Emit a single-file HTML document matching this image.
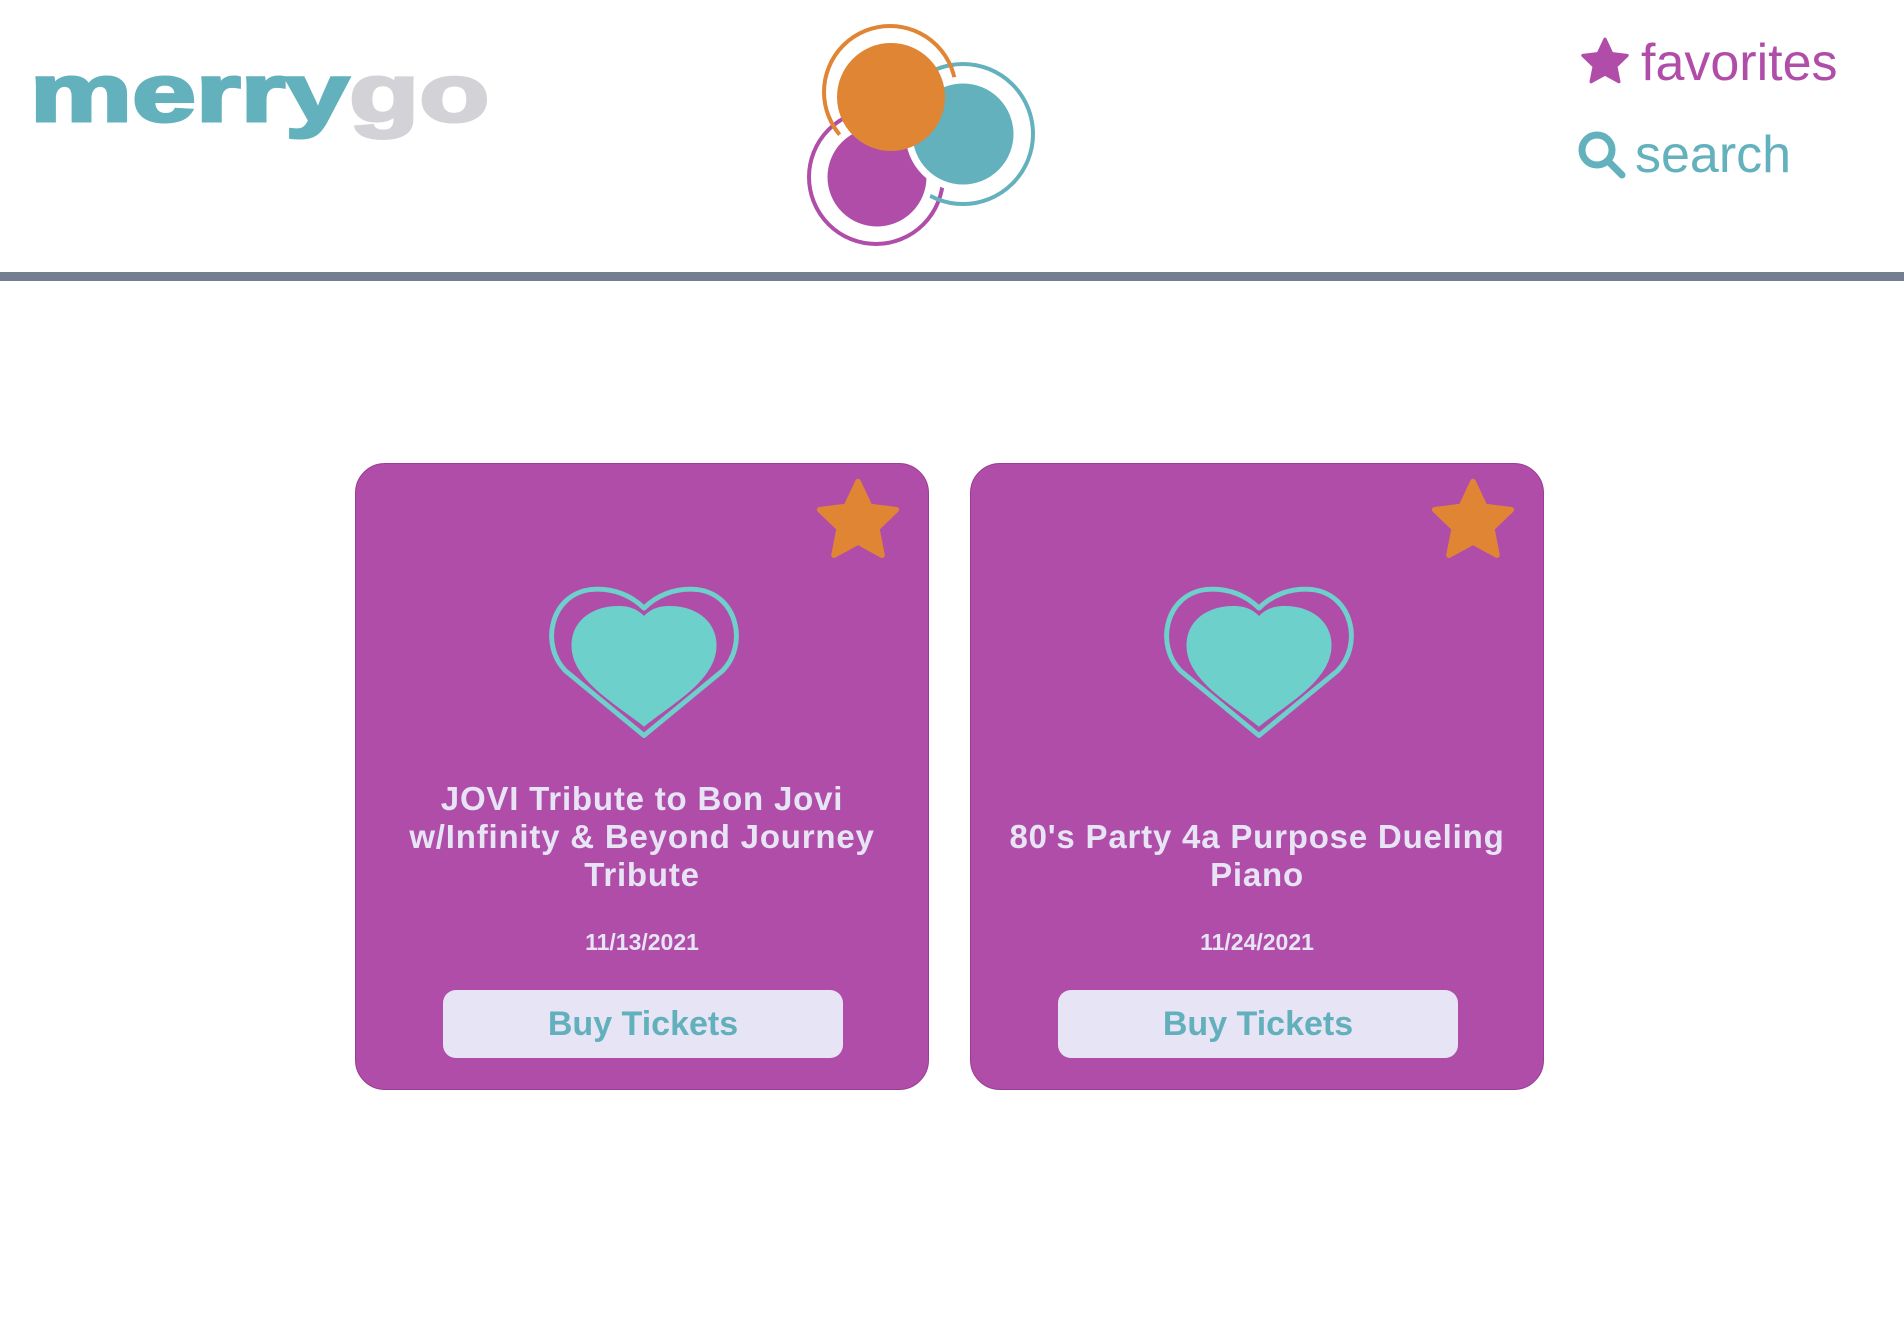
<!DOCTYPE html>
<html><head><meta charset="utf-8">
<style>
html,body{margin:0;padding:0;background:#fff;width:1904px;height:1320px;overflow:hidden;position:relative;font-family:"Liberation Sans",sans-serif}
.abs{position:absolute}
.logo{left:30px;top:34px;font-size:82px;font-weight:bold;line-height:120px;color:#63b1bc;white-space:nowrap;transform:scaleX(1.4);transform-origin:0 0;-webkit-text-stroke:3px #63b1bc;letter-spacing:0px}
.logo span{color:#d3d2d6;-webkit-text-stroke:3px #d3d2d6}
.bar{left:0;top:272px;width:1904px;height:9px;background:#737f90}
.nav{font-size:52px;white-space:nowrap;line-height:60px}
.card{width:572px;height:625px;border:1px solid #9a3d95;background:#b04da9;border-radius:30px;top:463px}
.title{left:0;width:572px;text-align:center;color:#e6e4f5;font-weight:bold;font-size:33px;letter-spacing:0.8px;line-height:38px}
.date{left:0;width:572px;text-align:center;color:#e6e4f5;font-weight:bold;font-size:23px;top:465px}
.btn{left:87px;top:526px;width:400px;height:68px;border-radius:13px;background:#e6e4f5;color:#62b0bb;font-weight:bold;font-size:34px;line-height:68px;text-align:center}
</style></head><body>
<div class="abs logo">merry<span>go</span></div>

<svg class="abs" style="left:790px;top:15px" width="250" height="235" viewBox="790 15 250 235">
<circle cx="876" cy="177" r="67" fill="none" stroke="#b04da9" stroke-width="4"/>
<circle cx="963" cy="134" r="70" fill="none" stroke="#63b1bc" stroke-width="4"/>
<circle cx="890" cy="92" r="66" fill="none" stroke="#e08534" stroke-width="4"/>
<circle cx="877" cy="177" r="53" fill="#b04da9" stroke="#fff" stroke-width="7"/>
<circle cx="963" cy="134" r="54" fill="#63b1bc" stroke="#fff" stroke-width="7"/>
<circle cx="891" cy="97" r="54" fill="#e08534"/>
</svg>

<svg class="abs" style="left:1578px;top:36px" width="54" height="52" viewBox="0 0 24 24"><path d="M12 1.5l3.1 6.6 7.1.9-5.2 5 1.4 7.1L12 17.6l-6.4 3.5 1.4-7.1-5.2-5 7.1-.9z" fill="#b04da9" stroke="#b04da9" stroke-width="1.5" stroke-linejoin="round"/></svg>
<div class="abs nav" style="left:1641px;top:33px;color:#b04da9">favorites</div>
<svg class="abs" style="left:1576px;top:129px" width="52" height="52" viewBox="0 0 52 52"><circle cx="21" cy="21" r="15" fill="none" stroke="#63b1bc" stroke-width="7"/><line x1="32" y1="32" x2="46" y2="46" stroke="#63b1bc" stroke-width="7" stroke-linecap="round"/></svg>
<div class="abs nav" style="left:1635px;top:125px;color:#63b1bc">search</div>

<div class="abs bar"></div>

<div class="abs card" style="left:355px">
 <svg class="abs" style="left:455px;top:12px" width="94" height="90" viewBox="0 0 24 24"><path d="M12 1.5l3.1 6.6 7.1.9-5.2 5 1.4 7.1L12 17.6l-6.4 3.5 1.4-7.1-5.2-5 7.1-.9z" fill="#e08534" stroke="#e08534" stroke-width="1.5" stroke-linejoin="round"/></svg>
 <svg class="abs" style="left:190px;top:120px" width="196" height="158" viewBox="0 0 200 160"><path d="M100 154 L20 88 C-6 62 4 10 46 5 C70 3 88 12 100 24 C112 12 130 3 154 5 C196 10 206 62 180 88 Z" fill="none" stroke="#6dd0cb" stroke-width="5" stroke-linejoin="round"/><path d="M100 145 C72 122 26 98 26 62 C26 34 52 20 78 22 C90 23 96 28 100 32 C104 28 110 23 122 22 C148 20 174 34 174 62 C174 98 128 122 100 145Z" fill="#6dd0cb"/></svg>
 <div class="abs title" style="top:316px">JOVI Tribute to Bon Jovi<br>w/Infinity &amp; Beyond Journey<br>Tribute</div>
 <div class="abs date">11/13/2021</div>
 <div class="abs btn">Buy Tickets</div>
</div>

<div class="abs card" style="left:970px">
 <svg class="abs" style="left:455px;top:12px" width="94" height="90" viewBox="0 0 24 24"><path d="M12 1.5l3.1 6.6 7.1.9-5.2 5 1.4 7.1L12 17.6l-6.4 3.5 1.4-7.1-5.2-5 7.1-.9z" fill="#e08534" stroke="#e08534" stroke-width="1.5" stroke-linejoin="round"/></svg>
 <svg class="abs" style="left:190px;top:120px" width="196" height="158" viewBox="0 0 200 160"><path d="M100 154 L20 88 C-6 62 4 10 46 5 C70 3 88 12 100 24 C112 12 130 3 154 5 C196 10 206 62 180 88 Z" fill="none" stroke="#6dd0cb" stroke-width="5" stroke-linejoin="round"/><path d="M100 145 C72 122 26 98 26 62 C26 34 52 20 78 22 C90 23 96 28 100 32 C104 28 110 23 122 22 C148 20 174 34 174 62 C174 98 128 122 100 145Z" fill="#6dd0cb"/></svg>
 <div class="abs title" style="top:354px">80's Party 4a Purpose Dueling<br>Piano</div>
 <div class="abs date">11/24/2021</div>
 <div class="abs btn">Buy Tickets</div>
</div>
</body></html>
